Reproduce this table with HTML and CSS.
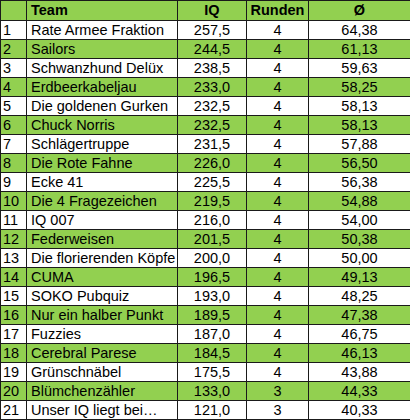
FILE: index.html
```html
<!DOCTYPE html>
<html>
<head>
<meta charset="utf-8">
<link rel="stylesheet" href="styles.css">
</head>
<body>
<table class="sheet">
<colgroup>
<col class="c-rank"><col class="c-team"><col class="c-iq"><col class="c-rounds"><col class="c-avg">
</colgroup>
<thead>
<tr class="head"><th></th><th class="team">Team</th><th>IQ</th><th>Runden</th><th>Ø</th></tr>
</thead>
<tbody>
<tr><td class="rank">1</td><td class="team">Rate Armee Fraktion</td><td>257,5</td><td>4</td><td>64,38</td></tr>
<tr class="g"><td class="rank">2</td><td class="team">Sailors</td><td>244,5</td><td>4</td><td>61,13</td></tr>
<tr><td class="rank">3</td><td class="team">Schwanzhund Delüx</td><td>238,5</td><td>4</td><td>59,63</td></tr>
<tr class="g"><td class="rank">4</td><td class="team">Erdbeerkabeljau</td><td>233,0</td><td>4</td><td>58,25</td></tr>
<tr><td class="rank">5</td><td class="team">Die goldenen Gurken</td><td>232,5</td><td>4</td><td>58,13</td></tr>
<tr class="g"><td class="rank">6</td><td class="team">Chuck Norris</td><td>232,5</td><td>4</td><td>58,13</td></tr>
<tr><td class="rank">7</td><td class="team">Schlägertruppe</td><td>231,5</td><td>4</td><td>57,88</td></tr>
<tr class="g"><td class="rank">8</td><td class="team">Die Rote Fahne</td><td>226,0</td><td>4</td><td>56,50</td></tr>
<tr><td class="rank">9</td><td class="team">Ecke 41</td><td>225,5</td><td>4</td><td>56,38</td></tr>
<tr class="g"><td class="rank">10</td><td class="team">Die 4 Fragezeichen</td><td>219,5</td><td>4</td><td>54,88</td></tr>
<tr><td class="rank">11</td><td class="team">IQ 007</td><td>216,0</td><td>4</td><td>54,00</td></tr>
<tr class="g"><td class="rank">12</td><td class="team">Federweisen</td><td>201,5</td><td>4</td><td>50,38</td></tr>
<tr><td class="rank">13</td><td class="team">Die florierenden Köpfe</td><td>200,0</td><td>4</td><td>50,00</td></tr>
<tr class="g"><td class="rank">14</td><td class="team">CUMA</td><td>196,5</td><td>4</td><td>49,13</td></tr>
<tr><td class="rank">15</td><td class="team">SOKO Pubquiz</td><td>193,0</td><td>4</td><td>48,25</td></tr>
<tr class="g"><td class="rank">16</td><td class="team">Nur ein halber Punkt</td><td>189,5</td><td>4</td><td>47,38</td></tr>
<tr><td class="rank">17</td><td class="team">Fuzzies</td><td>187,0</td><td>4</td><td>46,75</td></tr>
<tr class="g"><td class="rank">18</td><td class="team">Cerebral Parese</td><td>184,5</td><td>4</td><td>46,13</td></tr>
<tr><td class="rank">19</td><td class="team">Grünschnäbel</td><td>175,5</td><td>4</td><td>43,88</td></tr>
<tr class="g"><td class="rank">20</td><td class="team">Blümchenzähler</td><td>133,0</td><td>3</td><td>44,33</td></tr>
<tr><td class="rank">21</td><td class="team">Unser IQ liegt bei…</td><td>121,0</td><td>3</td><td>40,33</td></tr>
</tbody>
</table>
</body>
</html>
```
FILE: styles.css
```css
html, body {
  margin: 0;
  padding: 0;
  background: #ffffff;
}
.sheet {
  border-collapse: collapse;
  table-layout: fixed;
  width: 410px;
  font-family: Arial, "Liberation Sans", sans-serif;
  font-size: 14.5px;
  color: #000;
}
.c-rank { width: 26px; }
.c-team { width: 151px; }
.c-iq { width: 69px; }
.c-rounds { width: 62px; }
.c-avg { width: 102px; }
.sheet th, .sheet td {
  border: 1px solid #1a1a1a;
  padding: 0;
  height: 18px;
  line-height: 18px;
  text-align: center;
  white-space: nowrap;
  overflow: hidden;
}
.sheet th {
  height: 19px;
  line-height: 19px;
  font-weight: bold;
}
.head, .g {
  background: #92d050;
}
.sheet .rank {
  text-align: left;
  padding-left: 2px;
}
.sheet .team {
  text-align: left;
  padding-left: 4px;
}
```
